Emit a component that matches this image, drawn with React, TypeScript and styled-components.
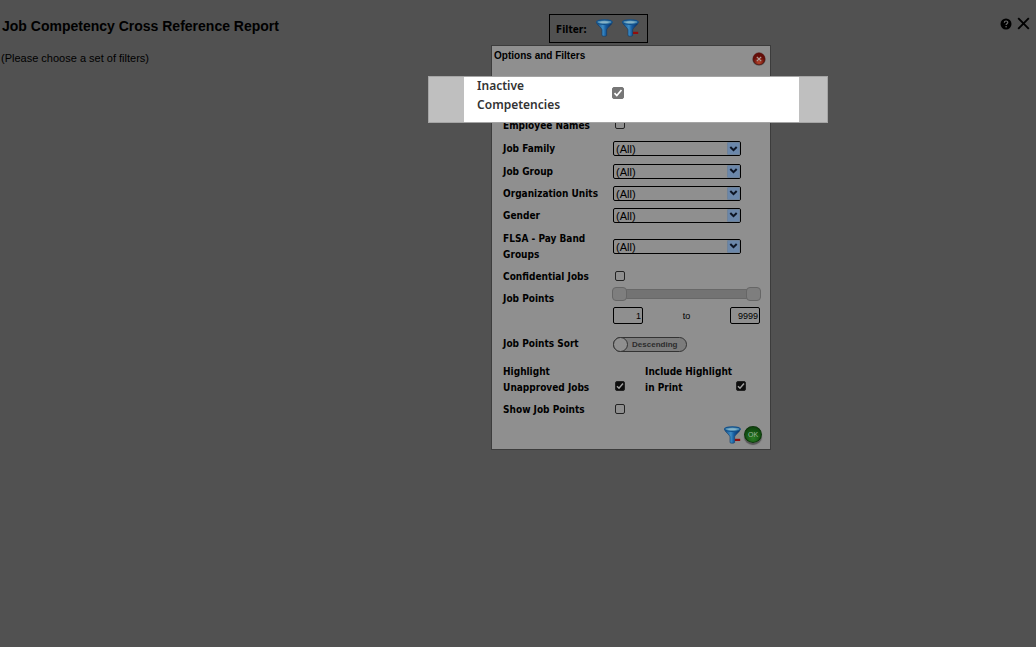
import React, { useId, useState } from "react";
import styled, { createGlobalStyle } from "styled-components";

const GlobalStyle = createGlobalStyle`
  *, *::before, *::after { box-sizing: border-box; }
  body {
    margin: 0;
    background: #515151;
    color: #000;
    font-family: "Liberation Sans", Arial, sans-serif;
    font-size: 11px;
  }
`;

const uiFont = `"DejaVu Sans Condensed", Tahoma, sans-serif`;

const Page = styled.main`
  min-height: 100vh;
`;

const Header = styled.header`
  display: grid;
  grid-template-columns: 53% auto 1fr;
  align-items: start;
  padding-top: 14px;
`;

const Title = styled.h1`
  margin: 0;
  padding: 2px 0 0 2px;
  font-size: 14px;
  line-height: 20px;
`;

const Hint = styled.p`
  margin: 7px 0 0 1px;
  line-height: 16px;
`;

const FilterArea = styled.div`
  position: relative;
`;

const Toolbar = styled.div`
  display: flex;
  align-items: center;
  gap: 9px;
  height: 29px;
  padding: 0 8px 0 6px;
  border: 1px solid #000;
  font: bold 10px/16px ${uiFont};
`;

const ToolbarLabel = styled.span`
  padding-top: 2px;
`;

const WindowActions = styled.div`
  display: flex;
  justify-content: flex-end;
  align-items: center;
  gap: 5px;
  padding: 3px 6px 0 0;
`;

const IconButton = styled.button`
  display: block;
  padding: 0;
  border: 0;
  background: none;
  color: inherit;
  cursor: pointer;
  svg { display: block; }
`;

const ToolbarButton = styled(IconButton)`
  margin-bottom: 2px;
`;

const Panel = styled.section`
  position: absolute;
  top: 31px;
  left: -58px;
  width: 280px;
  border: 1px solid #3c3c3c;
  background: #8f8f8f;
`;

const PanelHeader = styled.div`
  display: flex;
  justify-content: space-between;
  align-items: flex-start;
  height: 67px;
  padding: 2px 4px 0 2px;
`;

const PanelTitle = styled.h2`
  margin: 0;
  font: bold 10px/16px "Liberation Sans", Arial, sans-serif;
`;

const CloseBall = styled(IconButton)`
  margin-top: 4px;
`;

const Row = styled.div<{ $height?: number; $top?: boolean }>`
  display: grid;
  grid-template-columns: 110px 1fr;
  align-items: ${(p) => (p.$top ? "start" : "center")};
  height: ${(p) => p.$height ?? 22}px;
  padding: 0 9px 0 11px;
`;

const Label = styled.label`
  padding-top: 1px;
  font: bold 10px/16px ${uiFont};
`;

const PointsLabel = styled(Label)`
  padding-top: 4px;
`;

const Check = styled.input.attrs({ type: "checkbox" })`
  appearance: none;
  display: block;
  width: 10px;
  height: 10px;
  margin: 0 0 2px 2px;
  border: 1px solid #222;
  border-radius: 2px;
  background: transparent;
  &:checked {
    background: #0d0d0d
      url("data:image/svg+xml,%3Csvg xmlns='http://www.w3.org/2000/svg' viewBox='0 0 10 10'%3E%3Cpath d='M2 5.2 4 7.2 8 2.6' fill='none' stroke='%23a0a0a0' stroke-width='1.5'/%3E%3C/svg%3E")
      center / 10px 10px no-repeat;
  }
`;

const SelectBox = styled.div`
  display: grid;
  width: 128px;
  height: 15px;
  align-items: center;
  > * { grid-area: 1 / 1; }
`;

const NativeSelect = styled.select`
  appearance: none;
  width: 100%;
  height: 15px;
  padding: 0 16px 0 2px;
  border: 1px solid #000;
  border-radius: 2px;
  background: transparent;
  color: #000;
  font: 11px/14px "Liberation Sans", Arial, sans-serif;
`;

const ArrowBox = styled.span`
  display: flex;
  align-items: center;
  justify-content: center;
  justify-self: end;
  width: 13px;
  height: 13px;
  margin-right: 1px;
  border: 1px solid #6f8298;
  border-radius: 1px;
  background: #6b87aa;
  pointer-events: none;
`;

const PointsField = styled.div`
  width: 147px;
`;

const Slider = styled.div`
  position: relative;
  display: flex;
  align-items: center;
  height: 14px;
  margin: 0 -1px;
  &::before {
    content: "";
    width: 100%;
    height: 10px;
    border: 1px solid #686868;
    border-radius: 3px;
    background: #737373;
  }
`;

const Range = styled.input.attrs({ type: "range" })`
  position: absolute;
  inset: 0;
  appearance: none;
  width: 100%;
  height: 14px;
  margin: 0;
  background: none;
  pointer-events: none;
  &::-webkit-slider-thumb {
    appearance: none;
    width: 15px;
    height: 14px;
    border: 1px solid #666;
    border-radius: 4px;
    background: #7e7e7e;
    pointer-events: auto;
  }
`;

const PointsInputs = styled.div`
  display: flex;
  align-items: center;
  justify-content: space-between;
  margin-top: 6px;
  font: 9px/16px "Liberation Sans", Arial, sans-serif;
`;

const NumberBox = styled.input.attrs({ type: "text", inputMode: "numeric" })`
  width: 30px;
  height: 17px;
  padding: 0 1px;
  border: 1px solid #000;
  border-radius: 2px;
  background: transparent;
  color: #000;
  font: 9px/15px "Liberation Sans", Arial, sans-serif;
  text-align: right;
`;

const Toggle = styled.label`
  display: flex;
  align-items: center;
  width: 74px;
  height: 15px;
  margin-top: 2px;
  border: 1px solid #333;
  border-radius: 8px;
  background: #7c7c7c;
  color: #2c2c2c;
  font: bold 8px/13px "Liberation Sans", Arial, sans-serif;
`;

const ToggleKnob = styled.input.attrs({ type: "checkbox", role: "switch" })`
  appearance: none;
  width: 15px;
  height: 15px;
  margin: 0 4px 0 -1px;
  border: 1px solid #333;
  border-radius: 50%;
  background: #8f8f8f;
`;

const HighlightRow = styled.div`
  display: grid;
  grid-template-columns: 110px 32px 89px 1fr;
  align-items: end;
  height: 45px;
  padding: 0 9px 3px 11px;
  ${Check} { margin-bottom: 5px; }
`;

const Footer = styled.div`
  display: flex;
  justify-content: flex-end;
  align-items: center;
  gap: 3px;
  height: 29px;
  padding: 0 8px 0 0;
`;

const OkButton = styled.button`
  display: flex;
  align-items: center;
  justify-content: center;
  width: 18px;
  height: 17px;
  padding: 0;
  border: 1px solid #0c350b;
  border-radius: 50%;
  background: radial-gradient(circle at 50% 75%, #2a7d24, #125011 60%, #0d3a0c);
  box-shadow: 0 2px 1px #555;
  color: #9db59b;
  font: 7px/8px "Liberation Sans", Arial, sans-serif;
`;

const Spotlight = styled.div`
  position: absolute;
  top: 30px;
  left: -64px;
  width: 400px;
  height: 47px;
  padding: 0 28px 0 35px;
  border: 1px solid #a5a5a5;
  background: #bfbfbf;
`;

const SpotlightContent = styled.div`
  display: grid;
  grid-template-columns: 134px 1fr;
  height: 45px;
  padding-left: 13px;
  background: #fff;
`;

const SpotlightLabel = styled.label`
  width: 100px;
  margin-top: -1px;
  color: #333;
  font: 600 12px/19px "Noto Sans", sans-serif;
`;

const SpotlightCheck = styled(Check)`
  width: 12px;
  height: 12px;
  margin: 10px 0 0 1px;
  border-color: #767676;
  &:checked {
    background: #767676
      url("data:image/svg+xml,%3Csvg xmlns='http://www.w3.org/2000/svg' viewBox='0 0 10 10'%3E%3Cpath d='M1.5 5.2 3.8 7.5 8.5 2' fill='none' stroke='%23fff' stroke-width='1.7'/%3E%3C/svg%3E")
      center / 10px 10px no-repeat;
  }
`;

function FunnelIcon({ clear }: { clear?: boolean }) {
  const id = useId();
  return (
    <svg width="17" height="18" viewBox="0 0 17 18" aria-hidden="true">
      <defs>
        <linearGradient id={id} x1="0" x2="1">
          <stop offset="0" stopColor="#0f4a86" />
          <stop offset=".4" stopColor="#3d8cc4" />
          <stop offset=".6" stopColor="#145a9e" />
          <stop offset="1" stopColor="#0a2a5c" />
        </linearGradient>
      </defs>
      <path d="M.5 3.200C1 6.200 5.500 8.500 6 10.800v5.800c.9.900 3.700.9 4.600 0v-5.800C11.200 8.500 15.700 6.200 16.300 3.200Z" fill={`url(#${id})`} stroke="#0f3a68" strokeWidth=".6" />
      <ellipse cx="8.400" cy="3.100" rx="7.800" ry="2.300" fill="#5290b4" stroke="#12508a" strokeWidth="1.200" />
      <path d="M3 3.300c2-1.400 8-1.500 10.500-.2-2 1.500-7.500 1.700-10.500.2Z" fill="#86b2c6" />
      {clear && <path d="M11 12.800h5.200v2.200H11Z" fill="#930d0d" />}
    </svg>
  );
}

function RedBallIcon() {
  const id = useId();
  return (
    <svg width="14" height="14" viewBox="0 0 14 14" aria-hidden="true">
      <defs>
        <radialGradient id={id} cx=".5" cy=".8">
          <stop offset="0" stopColor="#b5452c" />
          <stop offset="1" stopColor="#650d08" />
        </radialGradient>
      </defs>
      <ellipse cx="7" cy="8" rx="6.500" ry="5.500" fill="#555" />
      <circle cx="7" cy="6.800" r="6" fill={`url(#${id})`} stroke="#500b08" strokeWidth=".6" />
      <path d="m4.800 4.800 4.400 4.400m0-4.400L4.800 9.200" stroke="#b09c98" strokeWidth="1.200" />
    </svg>
  );
}

function HelpIcon() {
  return (
    <svg width="12" height="12" viewBox="0 0 12 12" aria-hidden="true">
      <circle cx="6" cy="6" r="5.500" fill="#000" />
      <path d="M4.300 4.700c0-2.300 3.500-2.200 3.500-.2 0 1.200-1.700 1.200-1.700 2.500" fill="none" stroke="#6b6b6b" strokeWidth="1.200" />
      <circle cx="6.100" cy="8.800" r=".8" fill="#6b6b6b" />
    </svg>
  );
}

function CrossIcon() {
  return (
    <svg width="13" height="13" viewBox="0 0 13 13" aria-hidden="true">
      <path d="m1.200 1.200 10.600 10.600m0-10.600L1.200 11.800" stroke="#000" strokeWidth="1.900" />
    </svg>
  );
}

function SelectRow({ label, height }: { label: string; height?: number }) {
  const id = useId();
  return (
    <Row $height={height}>
      <Label htmlFor={id}>{label}</Label>
      <SelectBox>
        <NativeSelect id={id}>
          <option>(All)</option>
        </NativeSelect>
        <ArrowBox>
          <svg width="9" height="6" viewBox="0 0 9 6" aria-hidden="true">
            <path d="m1.300 1 3.200 3.200L7.700 1" fill="none" stroke="#0d1524" strokeWidth="2" />
          </svg>
        </ArrowBox>
      </SelectBox>
    </Row>
  );
}

function CheckRow({ label, height }: { label: string; height?: number }) {
  const id = useId();
  return (
    <Row $height={height}>
      <Label htmlFor={id}>{label}</Label>
      <Check id={id} />
    </Row>
  );
}

function PointsRow() {
  const [from, setFrom] = useState(1);
  const [to, setTo] = useState(9999);
  const read = (set: (n: number) => void) => (e: React.ChangeEvent<HTMLInputElement>) =>
    set(Number(e.target.value) || 0);
  return (
    <Row $height={45} $top>
      <PointsLabel htmlFor="points-from">Job Points</PointsLabel>
      <PointsField>
        <Slider>
          <Range aria-label="Lowest job points" min={1} max={9999} value={from} onChange={read(setFrom)} />
          <Range aria-label="Highest job points" min={1} max={9999} value={to} onChange={read(setTo)} />
        </Slider>
        <PointsInputs>
          <NumberBox id="points-from" value={from} onChange={read(setFrom)} />
          <label htmlFor="points-to">to</label>
          <NumberBox id="points-to" value={to} onChange={read(setTo)} />
        </PointsInputs>
      </PointsField>
    </Row>
  );
}

export default function App() {
  return (
    <Page>
      <GlobalStyle />
      <Header>
        <Title>Job Competency Cross Reference Report</Title>
        <FilterArea>
          <Toolbar>
            <ToolbarLabel>Filter:</ToolbarLabel>
            <ToolbarButton aria-label="Set filters"><FunnelIcon /></ToolbarButton>
            <ToolbarButton aria-label="Clear filters"><FunnelIcon clear /></ToolbarButton>
          </Toolbar>
          <Panel aria-labelledby="panel-title">
            <PanelHeader>
              <PanelTitle id="panel-title">Options and Filters</PanelTitle>
              <CloseBall aria-label="Close filters"><RedBallIcon /></CloseBall>
            </PanelHeader>
            <CheckRow label="Employee Names" height={24} />
            <SelectRow label="Job Family" height={23} />
            <SelectRow label="Job Group" />
            <SelectRow label="Organization Units" />
            <SelectRow label="Gender" />
            <SelectRow label="FLSA - Pay Band Groups" height={40} />
            <CheckRow label="Confidential Jobs" height={21} />
            <PointsRow />
            <Row>
              <Label htmlFor="sort">Job Points Sort</Label>
              <Toggle>
                <ToggleKnob id="sort" />
                Descending
              </Toggle>
            </Row>
            <HighlightRow>
              <Label htmlFor="unapproved">Highlight Unapproved Jobs</Label>
              <Check id="unapproved" defaultChecked />
              <Label htmlFor="in-print">Include Highlight in Print</Label>
              <Check id="in-print" defaultChecked />
            </HighlightRow>
            <CheckRow label="Show Job Points" height={21} />
            <Footer>
              <IconButton aria-label="Clear filters"><FunnelIcon clear /></IconButton>
              <OkButton>OK</OkButton>
            </Footer>
            <Spotlight>
              <SpotlightContent>
                <SpotlightLabel htmlFor="inactive">Inactive Competencies</SpotlightLabel>
                <SpotlightCheck id="inactive" defaultChecked />
              </SpotlightContent>
            </Spotlight>
          </Panel>
        </FilterArea>
        <WindowActions>
          <IconButton aria-label="Help"><HelpIcon /></IconButton>
          <IconButton aria-label="Close report"><CrossIcon /></IconButton>
        </WindowActions>
      </Header>
      <Hint>(Please choose a set of filters)</Hint>
    </Page>
  );
}
